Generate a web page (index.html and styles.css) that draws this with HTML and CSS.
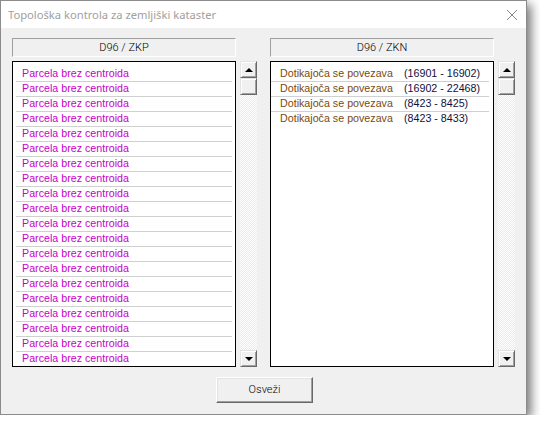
FILE: index.html
```html
<!DOCTYPE html>
<html>
<head>
<meta charset="utf-8">
<link rel="stylesheet" href="styles.css">
</head>
<body>
<div class="window">
  <div class="titlebar">
    <span class="title">Topološka kontrola za zemljiški kataster</span>
    <svg class="close" width="12" height="12" viewBox="0 0 12 12"><path d="M1 1L11 11M11 1L1 11" stroke="#8a8a8a" stroke-width="1" fill="none"/></svg>
  </div>
  <div class="client">
    <div class="panes">
      <div class="pane">
        <div class="header">D96 / ZKP</div>
        <div class="listbox left">
          <div class="item">Parcela brez centroida</div>
          <div class="item">Parcela brez centroida</div>
          <div class="item">Parcela brez centroida</div>
          <div class="item">Parcela brez centroida</div>
          <div class="item">Parcela brez centroida</div>
          <div class="item">Parcela brez centroida</div>
          <div class="item">Parcela brez centroida</div>
          <div class="item">Parcela brez centroida</div>
          <div class="item">Parcela brez centroida</div>
          <div class="item">Parcela brez centroida</div>
          <div class="item">Parcela brez centroida</div>
          <div class="item">Parcela brez centroida</div>
          <div class="item">Parcela brez centroida</div>
          <div class="item">Parcela brez centroida</div>
          <div class="item">Parcela brez centroida</div>
          <div class="item">Parcela brez centroida</div>
          <div class="item">Parcela brez centroida</div>
          <div class="item">Parcela brez centroida</div>
          <div class="item">Parcela brez centroida</div>
          <div class="item">Parcela brez centroida</div>
        </div>
        <div class="scrollbar">
          <div class="sbtn"><span class="arrow up"></span></div>
          <div class="thumb"></div>
          <div class="track"></div>
          <div class="sbtn"><span class="arrow down"></span></div>
        </div>
      </div>
      <div class="pane">
        <div class="header">D96 / ZKN</div>
        <div class="listbox right">
          <div class="item"><span class="lbl">Dotikajoča se povezava</span><span class="num">(16901 - 16902)</span></div>
          <div class="item"><span class="lbl">Dotikajoča se povezava</span><span class="num">(16902 - 22468)</span></div>
          <div class="item"><span class="lbl">Dotikajoča se povezava</span><span class="num">(8423 - 8425)</span></div>
          <div class="item"><span class="lbl">Dotikajoča se povezava</span><span class="num">(8423 - 8433)</span></div>
        </div>
        <div class="scrollbar">
          <div class="sbtn"><span class="arrow up"></span></div>
          <div class="thumb"></div>
          <div class="track"></div>
          <div class="sbtn"><span class="arrow down"></span></div>
        </div>
      </div>
    </div>
    <div class="actions">
      <div class="button">Osveži</div>
    </div>
  </div>
</div>
</body>
</html>
```
FILE: styles.css
```css
html, body {
  margin: 0;
  background: #ffffff;
}

.window {
  box-sizing: border-box;
  width: 527px;
  height: 415px;
  border: 1px solid #8c8c8c;
  background: #f0f0f0;
  box-shadow: 4px 4px 10px rgba(0, 0, 0, 0.55);
  display: flex;
  flex-direction: column;
}

.titlebar {
  height: 27px;
  background: #ffffff;
  display: flex;
  align-items: center;
  justify-content: space-between;
  padding: 0 8px 0 7px;
}

.title {
  font-family: "Noto Sans", "Open Sans", sans-serif;
  font-size: 11.2px;
  color: #a0a0a0;
}

.close {
  display: block;
}

.client {
  flex: 1;
  padding: 10px 11px 11px 11px;
  display: flex;
  flex-direction: column;
  gap: 10px;
}

.panes {
  display: flex;
  gap: 13px;
}

.pane {
  display: grid;
  grid-template-columns: 224px 17px;
  grid-template-rows: 19px 306px;
  column-gap: 4px;
  row-gap: 4px;
}

.header {
  box-sizing: border-box;
  border: 1px solid;
  border-color: #a0a0a0 #ffffff #ffffff #a0a0a0;
  font-family: Roboto, "Liberation Sans", sans-serif;
  font-weight: 300;
  font-size: 11px;
  line-height: 17px;
  text-align: center;
  color: #000;
}

.listbox {
  grid-column: 1;
  grid-row: 2;
  box-sizing: border-box;
  border: 1px solid #000;
  background: #ffffff;
  padding-top: 4px;
  overflow: hidden;
}

.item {
  box-sizing: border-box;
  height: 15px;
  border-top: 1px solid #d0d0d0;
  margin: 0 3px;
  padding-left: 6px;
  font-family: "Liberation Sans", Arial, sans-serif;
  font-size: 10.7px;
  line-height: 13px;
  white-space: nowrap;
}

.item:first-child {
  border-top-color: transparent;
}

.left .item {
  color: #c800c8;
}

.right .item {
  margin: 0 4px 0 0;
  padding-left: 9px;
}

.lbl {
  display: inline-block;
  width: 124px;
  color: #7a4a10;
}

.num {
  color: #101040;
}

.scrollbar {
  grid-column: 2;
  grid-row: 2;
  display: flex;
  flex-direction: column;
  background: repeating-conic-gradient(#ffffff 0 25%, #ebebeb 0 50%) 0 0 / 2px 2px;
}

.sbtn, .thumb {
  box-sizing: border-box;
  height: 17px;
  background: #f0f0f0;
  border: 1px solid;
  border-color: #e3e3e3 #696969 #696969 #e3e3e3;
  box-shadow: inset 1px 1px #ffffff, inset -1px -1px #a0a0a0;
  display: flex;
  align-items: center;
  justify-content: center;
}

.track {
  flex: 1;
}

.arrow {
  width: 0;
  height: 0;
  border-left: 4px solid transparent;
  border-right: 4px solid transparent;
}

.arrow.up {
  border-bottom: 4px solid #000;
}

.arrow.down {
  border-top: 4px solid #000;
}

.actions {
  display: flex;
  justify-content: center;
}

.button {
  box-sizing: border-box;
  width: 97px;
  height: 26px;
  margin-left: 2px;
  border: 1px solid;
  border-color: #ffffff #696969 #696969 #ffffff;
  box-shadow: inset -1px -1px #a0a0a0, inset 1px 1px #e3e3e3;
  background: #f0f0f0;
  font-family: Roboto, "Liberation Sans", sans-serif;
  font-weight: 300;
  font-size: 11px;
  line-height: 24px;
  text-align: center;
  color: #000;
}
```
